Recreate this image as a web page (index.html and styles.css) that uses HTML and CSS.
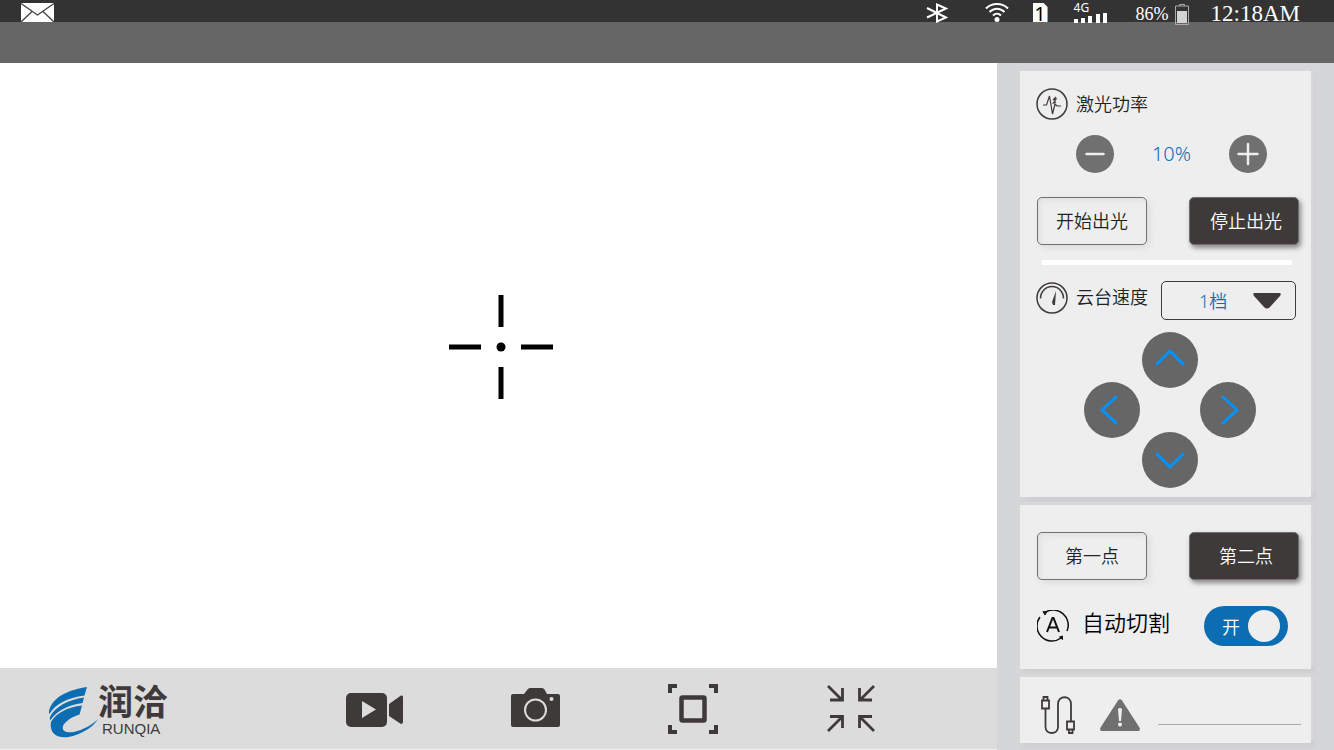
FILE: index.html
```html
<!DOCTYPE html>
<html lang="zh-CN">
<head>
  <meta charset="UTF-8">
  <title>润洽</title>
  <meta name="viewport" content="width=device-width, initial-scale=1">
  <link rel="stylesheet" href="styles.css">
</head>
<body>
  <header class="status">
    <svg class="mail" width="33" height="19" viewBox="0 0 33 19">
      <rect width="33" height="19" fill="#fff"/>
      <path d="M0 0.5L16.5 12L33 0.5M0 19L11 8.500M33 19L22 8.500" fill="none" stroke="#444" stroke-width="1.300"/>
    </svg>
    <svg class="bluetooth" width="23" height="20" viewBox="0 0 23 20">
      <path d="M1 5L20 14.500L11 18.500V1.500L20 5.500L1 14.500" fill="none" stroke="#fff" stroke-width="2"/>
    </svg>
    <svg class="wifi" width="24" height="20" viewBox="0 0 24 20" fill="none" stroke="#fff" stroke-width="2">
      <path d="M1 5.500C7-0.500 17-0.500 23 5.500M4.500 9C9 4.500 15 4.500 19.500 9M8 12.500C10.500 10 13.500 10 16 12.500"/>
      <circle cx="12" cy="16.500" r="2.500" fill="#fff" stroke="none"/>
    </svg>
    <span class="sim">1</span>
    <div class="signal">
      <span>4G</span>
      <svg width="34" height="12" viewBox="0 0 34 12" fill="#fff">
        <path d="M0 6h4v4H0zM7 5h4v5H7zM14 3h4v7h-4zM22 1h4v9h-4zM29 0h4v10h-4z"/>
      </svg>
    </div>
    <span class="percent">86%</span>
    <svg class="battery" width="14" height="22" viewBox="0 0 14 22">
      <path d="M4.500 3V1.500h5V3M0.500 3h13v18.500H0.500z" fill="none" stroke="#aaa"/>
      <rect x="2" y="8" width="10" height="12" fill="#d3d4d0"/>
    </svg>
    <span class="time">12:18AM</span>
  </header>
  <div class="titlebar"></div>

  <div class="layout">
    <main class="left">
      <div class="viewer">
        <svg width="104" height="104" viewBox="0 0 104 104">
          <path d="M0 52h32M72 52h32M52 0v32M52 72v32" stroke="#000" stroke-width="5"/>
          <circle cx="52" cy="52" r="4.500"/>
        </svg>
      </div>
      <footer class="toolbar">
        <div class="logo">
          <svg width="49" height="52" viewBox="0 0 49 52" fill="#0d6db3">
            <path d="M38 1C20 4 4 10 0 25C-0.500 27 0 28 0.500 28C6 18 18 12 35.500 9.500z"/>
            <path d="M35 11.500C20 14 6 20 1 31C0.500 33 1 34 1.500 34C8 25 18 19 33.500 17z"/>
            <path d="M33 19.500C19 21 7 27 2 36C0 48 9 54 24 50C36 46 45 40 49 33C43 39 34 44 25 46C13 48 11 41 17 36C21 32 26 30 30.500 28.500z"/>
          </svg>
          <div class="brand">
            <strong>润洽</strong>
            <span>RUNQIA</span>
          </div>
        </div>
        <nav class="tools">
          <button class="tool" aria-label="录像">
            <svg width="58" height="50" viewBox="0 0 58 50" fill="#3e3a39">
              <rect y="9" width="41" height="34" rx="5"/>
              <path d="M43 20L55 11.500Q57 11 57 13V38Q57 40 55 40L43 32z"/>
              <path d="M16 17L30 25.500L16 34z" fill="#dcdcdc"/>
            </svg>
          </button>
          <button class="tool" aria-label="拍照">
            <svg width="58" height="50" viewBox="0 0 58 50">
              <path d="M9 10H19L22.500 5.500Q23.500 4 25 4H37Q38.500 4 39.500 5.500L42 10H53Q55 10 55 12V41Q55 43 53 43H8Q6 43 6 41V12Q6 10 8 10z" fill="#3e3a39"/>
              <circle cx="30.500" cy="26" r="10.500" fill="none" stroke="#dcdcdc" stroke-width="2"/>
              <circle cx="46.500" cy="15" r="2" fill="#dcdcdc"/>
            </svg>
          </button>
          <button class="tool" aria-label="对焦">
            <svg width="50" height="50" viewBox="0 0 50 50" fill="none" stroke="#3e3a39">
              <path d="M9 2H2V9M41 2H48V9M48 41V48H41M9 48H2V41" stroke-width="4"/>
              <rect x="13.500" y="13.500" width="23" height="23" rx="1" stroke-width="4.500"/>
            </svg>
          </button>
          <button class="tool" aria-label="缩小">
            <svg width="50" height="50" viewBox="0 0 50 50" fill="none" stroke="#3e3a39" stroke-width="2.800">
              <path d="M1 2L15 16M3 16H15.500V4M47 2L33 16M45 16H32.500V4M1 47L15 33M3 32.500H15.500V44M47 47L33 33M45 32.500H32.500V44"/>
            </svg>
          </button>
        </nav>
      </footer>
    </main>

    <aside class="panel">
      <section class="card laser">
        <div class="title">
          <svg width="32" height="32" viewBox="0 0 32 32" fill="none" stroke="#3e3a39">
            <circle cx="16" cy="16" r="15" stroke-width="1.500"/>
            <path d="M7 17H10.500L13.500 8L16.500 26L19 16L21 18H25M20 9L17 12L20 11L17.500 15L20 14" stroke-width="1.200"/>
          </svg>
          <span>激光功率</span>
        </div>
        <div class="power">
          <button class="round" aria-label="减少">
            <svg width="20" height="24" viewBox="0 0 20 24"><path d="M1.500 12H18.500" stroke="#eee" stroke-width="2.500" stroke-linecap="round"/></svg>
          </button>
          <output>10%</output>
          <button class="round" aria-label="增加">
            <svg width="22" height="24" viewBox="0 0 22 24"><path d="M1.500 12H20.500M11 2V22" stroke="#eee" stroke-width="2.500" stroke-linecap="round"/></svg>
          </button>
        </div>
        <div class="pair">
          <button class="btn">开始出光</button>
          <button class="btn dark">停止出光</button>
        </div>
        <hr>
        <div class="title speed">
          <svg width="32" height="34" viewBox="0 0 32 34" fill="none" stroke="#3e3a39">
            <circle cx="16" cy="17" r="15" stroke-width="1.500"/>
            <path d="M4.500 17.500A11.500 12 0 0 1 27.500 17.500" stroke-width="1.500"/>
            <path d="M20 10L19 24H17L16 21z" fill="#3e3a39" stroke="none"/>
          </svg>
          <label for="speed">云台速度</label>
          <div class="select">
            <select id="speed">
              <option>1档</option>
            </select>
            <svg width="28" height="18" viewBox="0 0 28 18"><path d="M2 1H26Q29 1 27 4L17 15Q14 18 11 15L1 4Q-1 1 2 1z" fill="#3e3a39"/></svg>
          </div>
        </div>
        <div class="pad">
          <button class="arrow up" aria-label="上">
            <svg width="30" height="30" viewBox="0 0 30 30"><path d="M2 19L15 6L28 19"/></svg>
          </button>
          <button class="arrow prev" aria-label="左">
            <svg width="30" height="30" viewBox="0 0 30 30"><path d="M19 2L5 15L19 28"/></svg>
          </button>
          <button class="arrow next" aria-label="右">
            <svg width="30" height="30" viewBox="0 0 30 30"><path d="M10 2L24 15L10 28"/></svg>
          </button>
          <button class="arrow down" aria-label="下">
            <svg width="30" height="30" viewBox="0 0 30 30"><path d="M2 9L15 22L28 9"/></svg>
          </button>
        </div>
      </section>

      <section class="card points">
        <div class="pair">
          <button class="btn">第一点</button>
          <button class="btn dark">第二点</button>
        </div>
        <div class="auto">
          <svg width="32" height="32" viewBox="0 0 32 32" fill="none" stroke="#111" stroke-width="1.500">
            <path d="M8 2.500A15 15 0 0 1 30 21M3 7A15 15 0 0 0 24 28"/>
            <path d="M10 22L15.500 8H16.500L22 22M12 17.500H20" stroke-width="2"/>
            <path d="M6 1.500L9.500 2L8 5zM22.500 27L25.500 26L25.500 29.500z" fill="#111" stroke-width="1"/>
          </svg>
          <label class="name" for="auto">自动切割</label>
          <label class="switch">
            <input type="checkbox" id="auto" checked>
            <span>开</span>
            <i></i>
          </label>
        </div>
      </section>

      <section class="card message">
        <svg width="34" height="38" viewBox="0 0 34 38" fill="none" stroke="#3e3a39" stroke-width="1.800">
          <path d="M1 4.500H8V12.500H1zM2.500 4V1H6.500V4M4.500 13V31C4.500 39 17 39 17 31V8C17-1 30-1 30 8V25M26 25.500H33V33.500H26zM28 34V37H31.500V34"/>
        </svg>
        <svg width="40" height="32" viewBox="0 0 40 32">
          <path d="M18 1.500Q20-1 22 1.500L39.500 28.500Q41 32 37 32H3Q-1 32 0.500 28.500z" fill="#717071"/>
          <path d="M18 10Q20 8 22 10L21 22H19z" fill="#eee"/>
          <circle cx="20" cy="25.500" r="2" fill="#eee"/>
        </svg>
        <input type="text" aria-label="提示信息">
      </section>
    </aside>
  </div>
</body>
</html>
```

FILE: styles.css
```css
* {
  box-sizing: border-box;
}
body {
  margin: 0;
  min-height: 100vh;
  display: flex;
  flex-direction: column;
  font-family: "Noto Sans", "Noto Sans CJK SC", sans-serif;
  font-weight: 350;
  font-size: 18px;
  color: #222;
  background: #fff;
}
svg {
  display: block;
  flex: none;
}
button, select, input {
  font: inherit;
  margin: 0;
}
button {
  padding: 0;
  border: none;
  cursor: pointer;
}

/* status bar */
.status {
  position: relative;
  z-index: 1;
  height: 22px;
  padding: 3px 34px 0 21px;
  display: flex;
  align-items: flex-start;
  background: #333;
  color: #fff;
  line-height: 22px;
}
.mail {
  margin-right: auto;
}
.bluetooth {
  margin-right: 36px;
}
.wifi {
  margin-right: 24px;
}
.sim {
  width: 15px;
  height: 19px;
  margin-right: 26px;
  background: #fff;
  color: #000;
  text-align: center;
  font-size: 20px;
  font-weight: 400;
  clip-path: polygon(0 0, 11px 0, 100% 4px, 100% 100%, 0 100%);
}
.signal {
  margin-right: 28px;
  font-size: 12px;
  font-weight: 400;
  line-height: 10px;
}
.signal span {
  display: block;
}
.percent, .time {
  font-family: "Liberation Serif", serif;
}
.percent {
  margin-right: 6px;
}
.battery {
  margin-right: 22px;
}
.time {
  font-size: 23px;
}
.titlebar {
  height: 41px;
  background: #666;
}

/* layout */
.layout {
  flex: 1;
  display: flex;
}
.left {
  flex: 1;
  display: flex;
  flex-direction: column;
}
.viewer {
  flex: 1;
  display: flex;
  align-items: center;
  justify-content: center;
  padding: 0 0 37px 5px;
  background: #fff;
}
.toolbar {
  height: 82px;
  padding: 0 49px;
  display: flex;
  align-items: center;
  background: #dcdcdc;
  border-bottom: 1px solid #eee;
}
.logo {
  width: 297px;
  display: flex;
  align-items: center;
  padding-top: 6px;
  color: #3e3a39;
}
.brand {
  display: flex;
  flex-direction: column;
}
.brand strong {
  font-size: 35px;
  line-height: 34px;
  font-weight: 600;
}
.brand span {
  padding-left: 4px;
  font-family: "Liberation Sans", sans-serif;
  font-size: 15px;
  line-height: 20px;
}
.tools {
  display: flex;
  gap: 101px;
}
.tool {
  width: 58px;
  height: 50px;
  display: flex;
  justify-content: center;
  background: none;
}

/* right panel */
.panel {
  width: 337px;
  padding: 8px 23px 7px;
  display: flex;
  flex-direction: column;
  gap: 8px;
  background: #d5d6d8;
}
.card {
  background: #eee;
  box-shadow: 3px -3px 0 #d7d7d9, 4px 4px 4px #cfcfd1;
}
.laser {
  padding: 17px 12px 9px 16px;
}
.title {
  display: flex;
  gap: 8px;
  line-height: 32px;
}
.power {
  margin: 15px 32px 24px 40px;
  display: flex;
  align-items: center;
  justify-content: space-between;
}
.power output {
  padding-bottom: 2px;
  font-size: 20px;
  color: #0d6db3;
}
.round {
  width: 38px;
  height: 38px;
  display: flex;
  align-items: center;
  justify-content: center;
  border-radius: 50%;
  background: #717071;
}
.pair {
  display: flex;
  justify-content: space-between;
  padding-left: 1px;
}
.btn {
  width: 110px;
  height: 48px;
  padding-bottom: 2px;
  border: 1px solid #717071;
  border-radius: 5px;
  background: #eee;
  color: #222;
  box-shadow: 3px 3px 6px #ddd, inset 3px 3px 5px #e2e2e2;
}
.dark {
  padding-left: 4px;
  background: #3e3a39;
  color: #fff;
  box-shadow: 2px 3px 5px #888;
}
hr {
  height: 5px;
  margin: 15px 7px 16px 6px;
  border: none;
  background: #fff;
}
.select {
  position: relative;
  width: 135px;
  margin-left: auto;
  margin-right: 3px;
}
.select select {
  display: block;
  width: 100%;
  height: 39px;
  padding: 0 0 0 37px;
  appearance: none;
  border: 1px solid #3e3a39;
  border-radius: 5px;
  background: none;
  color: #0d6db3;
}
.select svg {
  position: absolute;
  right: 15px;
  top: 11px;
  pointer-events: none;
}
.pad {
  margin: 12px 0 0 4px;
  display: grid;
  grid-template-columns: 56px 56px 56px;
  grid-template-rows: 50px 6px 44px 6px 50px;
  column-gap: 2px;
  justify-content: center;
}
.arrow {
  display: flex;
  align-items: center;
  justify-content: center;
  border-radius: 50%;
  background: #666;
}
.arrow path {
  fill: none;
  stroke: #0093ff;
  stroke-width: 3;
  stroke-linecap: round;
}
.up {
  grid-area: 1 / 2 / 3 / 3;
}
.prev {
  grid-area: 2 / 1 / 5 / 2;
}
.next {
  grid-area: 2 / 3 / 5 / 4;
}
.down {
  grid-area: 4 / 2 / 6 / 3;
}

.points {
  padding: 27px 12px 23px 16px;
}
.auto {
  margin: 26px 11px 0 1px;
  display: flex;
  align-items: center;
  gap: 13px;
  color: #000;
}
.name {
  align-self: flex-start;
  font-size: 22px;
  line-height: 32px;
}
.switch {
  position: relative;
  width: 84px;
  height: 40px;
  margin-left: auto;
  padding: 0 8px 0 18px;
  display: flex;
  align-items: center;
  justify-content: space-between;
  border-radius: 20px;
  background: #0d6db3;
  color: #fff;
}
.switch input {
  position: absolute;
  inset: 0;
  opacity: 0;
}
.switch i {
  width: 32px;
  height: 32px;
  border-radius: 50%;
  background: #eee;
}

.message {
  flex: 1;
  display: flex;
  align-items: center;
  padding: 10px 10px 0 21px;
}
.message input {
  flex: 1;
  min-width: 0;
  height: 20px;
  margin-left: 18px;
  border: none;
  border-bottom: 1px solid #aaa;
  background: none;
}
.message svg + svg {
  margin-left: 25px;
}
```
